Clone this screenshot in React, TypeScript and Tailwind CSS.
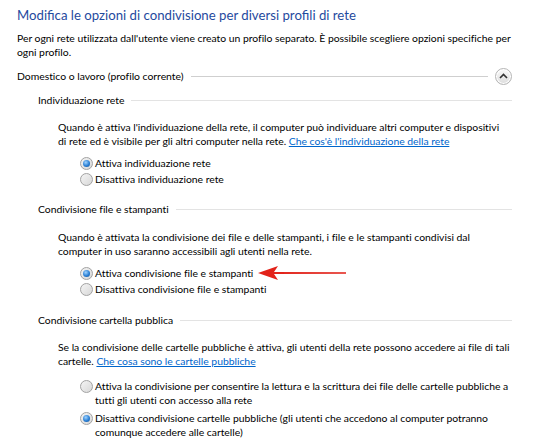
import type { ReactNode } from "react";

const FONT = { fontFamily: 'Lato, "Open Sans", sans-serif' };

function Radio({ checked }: { checked?: boolean }) {
  return (
    <span className="relative mt-[1px] flex h-[13px] w-[13px] shrink-0 items-center justify-center rounded-full border border-[#a2a2a2] bg-gradient-to-br from-[#f4f4f4] to-[#d8d8d8]">
      {checked ? (
        <span className="h-[7px] w-[7px] rounded-full bg-[radial-gradient(circle_at_40%_35%,#9fd3ff_0%,#2a7fd4_55%,#0f4f96_100%)]" />
      ) : null}
    </span>
  );
}

function Option({ checked, children }: { checked?: boolean; children: ReactNode }) {
  return (
    <label className="flex items-start gap-[2px] leading-[14px]">
      <Radio checked={checked} />
      <span className="whitespace-nowrap">{children}</span>
    </label>
  );
}

function SubHeading({ label }: { label: string }) {
  return (
    <div className="flex items-center gap-[7px] leading-[14px]">
      <span>{label}</span>
      <span className="h-px flex-1 bg-[#e3e3e3]" />
    </div>
  );
}

function Link({ children }: { children: ReactNode }) {
  return <a className="text-[#0066cc] underline">{children}</a>;
}

export default function App() {
  return (
    <div
      className="relative h-[439px] w-[550px] overflow-hidden bg-white text-[10.4px] tracking-[-0.02px] text-black"
      style={FONT}
    >
      <div className="pl-[17px] pr-[38px] pt-[5px]">
        <h1 className="text-[13.2px] leading-[20px] tracking-normal text-[#1f4a9e]">
          Modifica le opzioni di condivisione per diversi profili di rete
        </h1>
        <p className="mt-[6px] whitespace-nowrap leading-[14px]">
          Per ogni rete utilizzata dall'utente viene creato un profilo separato. È possibile scegliere opzioni specifiche per
          <br />
          ogni profilo.
        </p>

        <div className="mt-[8px] flex h-[18px] items-center">
          <span className="leading-[14px]">Domestico o lavoro (profilo corrente)</span>
          <span className="ml-[8px] h-px flex-1 bg-[#cfcfcf]" />
          <button
            type="button"
            className="ml-[7px] flex h-[17px] w-[17px] items-center justify-center rounded-full border border-[#b5b5b5] bg-gradient-to-b from-[#fbfbfb] to-[#dcdcdc] shadow-[inset_0_0_0_1px_#ffffff]"
          >
            <svg width="9" height="6" viewBox="0 0 9 6">
              <path d="M1 5 L4.5 1.5 L8 5" fill="none" stroke="#333" strokeWidth="1.6" />
            </svg>
          </button>
        </div>

        <div className="ml-[21px]">
          <div className="mt-[8px]">
            <SubHeading label="Individuazione rete" />
          </div>
          <div className="ml-[20px]">
            <p className="mt-[13px] whitespace-nowrap leading-[14px]">
              Quando è attiva l'individuazione della rete, il computer può individuare altri computer e dispositivi
              <br />
              di rete ed è visibile per gli altri computer nella rete.{" "}
              <Link>Che cos'è l'individuazione della rete</Link>
            </p>
            <div className="ml-[22px] mt-[8px] flex flex-col gap-[2px]">
              <Option checked>Attiva individuazione rete</Option>
              <Option>Disattiva individuazione rete</Option>
            </div>
          </div>

          <div className="mt-[16px]">
            <SubHeading label="Condivisione file e stampanti" />
          </div>
          <div className="ml-[20px]">
            <p className="mt-[14px] whitespace-nowrap leading-[14px]">
              Quando è attivata la condivisione dei file e delle stampanti, i file e le stampanti condivisi dal
              <br />
              computer in uso saranno accessibili agli utenti nella rete.
            </p>
            <div className="ml-[22px] mt-[8px] flex flex-col gap-[2px]">
              <Option checked>Attiva condivisione file e stampanti</Option>
              <Option>Disattiva condivisione file e stampanti</Option>
            </div>
          </div>

          <div className="mt-[17px]">
            <SubHeading label="Condivisione cartella pubblica" />
          </div>
          <div className="ml-[20px]">
            <p className="mt-[13px] whitespace-nowrap leading-[14px]">
              Se la condivisione delle cartelle pubbliche è attiva, gli utenti della rete possono accedere ai file di tali
              <br />
              cartelle. <Link>Che cosa sono le cartelle pubbliche</Link>
            </p>
            <div className="ml-[22px] mt-[11px] flex flex-col gap-[4px]">
              <Option>
                Attiva la condivisione per consentire la lettura e la scrittura dei file delle cartelle pubbliche a
                <br />
                tutti gli utenti con accesso alla rete
              </Option>
              <Option checked>
                Disattiva condivisione cartelle pubbliche (gli utenti che accedono al computer potranno
                <br />
                comunque accedere alle cartelle)
              </Option>
            </div>
          </div>
        </div>
      </div>

      <svg className="pointer-events-none absolute left-[256px] top-[264px]" width="92" height="18" viewBox="0 0 92 18">
        <path d="M2 9 L22 2 L18 7.9 L90 8.3 L90 9.7 L18 10.1 L22 16 Z" fill="#e2231a" />
      </svg>
    </div>
  );
}
